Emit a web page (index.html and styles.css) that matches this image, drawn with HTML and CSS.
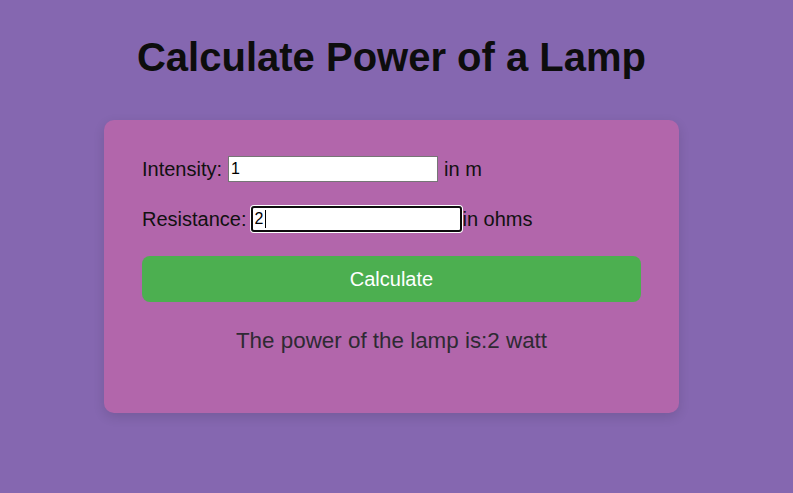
FILE: index.html
```html
<!DOCTYPE html>
<html>
<head>
<meta charset="utf-8">
<link rel="stylesheet" href="styles.css">
</head>
<body>
<div class="page">
  <h1 class="title">Calculate Power of a Lamp</h1>
  <div class="card">
    <div class="row">
      <label class="label">Intensity:</label>
      <input class="field" type="text" value="1">
      <span class="unit">in m</span>
    </div>
    <div class="row">
      <label class="label label-focus">Resistance:</label>
      <span class="focus-wrap"><input class="field field-focus" type="text" value="2"><span class="caret"></span></span><span class="unit unit-tight">in ohms</span>
    </div>
    <button class="btn">Calculate</button>
    <p class="result">The power of the lamp is:2 watt</p>
  </div>
</div>
</body>
</html>
```
FILE: styles.css
```css
html, body {
  margin: 0;
  padding: 0;
}
body {
  background: #8567b0;
  font-family: "Liberation Sans", Arial, sans-serif;
  height: 493px;
  overflow: hidden;
}
.page {
  display: flex;
  flex-direction: column;
  align-items: center;
  padding-right: 10px;
}
.title {
  margin: 34px 0 0;
  font-size: 40px;
  line-height: 46px;
  font-weight: bold;
  color: #0d0d0d;
}
.card {
  margin-top: 40px;
  width: 575px;
  box-sizing: border-box;
  padding: 36px 38px 60px;
  background: #b266ab;
  border-radius: 10px;
  box-shadow: 0 4px 12px rgba(0, 0, 0, 0.12);
  display: flex;
  flex-direction: column;
}
.row {
  display: flex;
  align-items: center;
  height: 26px;
  margin-bottom: 24px;
  font-size: 20px;
  color: #111;
}
.label {
  margin-right: 6px;
}
.label-focus {
  margin-right: 4px;
}
.field {
  width: 210px;
  height: 26px;
  box-sizing: border-box;
  border: 1px solid #767676;
  padding: 1px 2px;
  font-family: "Liberation Sans", Arial, sans-serif;
  font-size: 16px;
  color: #000;
  background: #fff;
  margin: 0;
  outline: none;
}
.focus-wrap {
  position: relative;
  display: inline-flex;
}
.field-focus {
  width: 211px;
  border: 2px solid #0d0d0d;
  border-radius: 3px;
  box-shadow: 0 0 0 1px #fff, inset 0 0 0 1px #fff;
  padding: 0 2px;
}
.caret {
  position: absolute;
  left: 14px;
  top: 4px;
  width: 1px;
  height: 18px;
  background: #000;
}
.unit {
  margin-left: 6px;
}
.unit-tight {
  margin-left: 1px;
}
.btn {
  height: 46px;
  border: none;
  border-radius: 8px;
  background: #4caf50;
  color: #fff;
  font-family: "Liberation Sans", Arial, sans-serif;
  font-size: 20px;
  padding: 0;
  cursor: pointer;
}
.result {
  margin: 26px 0 0;
  text-align: center;
  font-size: 22.4px;
  line-height: 25px;
  color: #2e2a33;
}
```
